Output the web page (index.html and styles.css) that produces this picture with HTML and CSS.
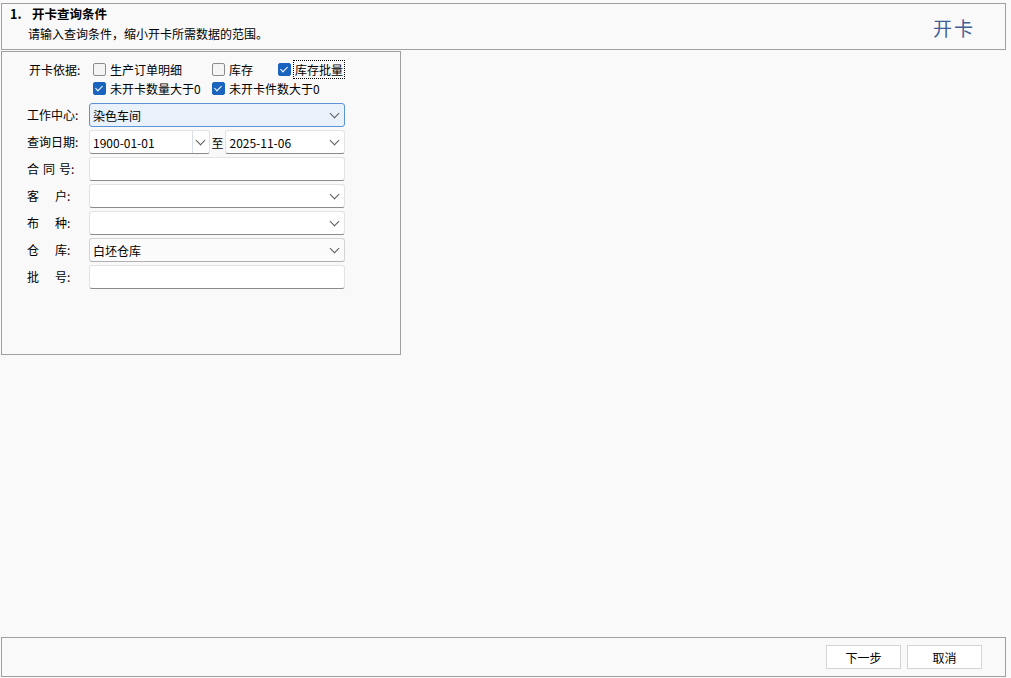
FILE: index.html
```html
<!DOCTYPE html>
<html lang="zh-CN">
<head>
  <meta charset="UTF-8">
  <title>开卡</title>
  <link rel="stylesheet" href="styles.css">
</head>
<body>
  <div class="page">
    <div class="header">
      <div class="header-text">
        <div class="title"><span class="num">1.</span>开卡查询条件</div>
        <div class="subtitle">请输入查询条件，缩小开卡所需数据的范围。</div>
      </div>
      <div class="brand">开卡</div>
    </div>

    <div class="panel">
      <div class="form">
        <div class="label label-top">开卡依据:</div>
        <div class="checks">
          <label class="check"><span class="box"></span>生产订单明细</label>
          <label class="check"><span class="box"></span>库存</label>
          <label class="check"><span class="box on"></span><span class="focus">库存批量</span></label>
          <label class="check"><span class="box on"></span>未开卡数量大于0</label>
          <label class="check"><span class="box on"></span>未开卡件数大于0</label>
        </div>

        <div class="label">工作中心:</div>
        <div class="field combo active"><span class="val">染色车间</span><span class="arrow"></span></div>

        <div class="label">查询日期:</div>
        <div class="dates">
          <div class="field date first"><span class="val">1900-01-01</span><span class="drop"><span class="arrow"></span></span></div>
          <span class="to">至</span>
          <div class="field date"><span class="val">2025-11-06</span><span class="arrow"></span></div>
        </div>

        <div class="label">合 同 号:</div>
        <div class="field"></div>

        <div class="label">客    户:</div>
        <div class="field combo"><span class="val"></span><span class="arrow"></span></div>

        <div class="label">布    种:</div>
        <div class="field combo"><span class="val"></span><span class="arrow"></span></div>

        <div class="label">仓    库:</div>
        <div class="field combo grey"><span class="val">白坯仓库</span><span class="arrow"></span></div>

        <div class="label">批    号:</div>
        <div class="field"></div>
      </div>
    </div>

    <div class="spacer"></div>

    <div class="footer">
      <button class="btn">下一步</button>
      <button class="btn">取消</button>
    </div>
  </div>
</body>
</html>
```

FILE: styles.css
```css
body {
  margin: 0;
  background-color: #f9f9f9;
  font-family: "Noto Sans CJK SC", "Liberation Sans", sans-serif;
  font-size: 12px;
  color: #000;
}

.page {
  height: 678px;
  display: flex;
  flex-direction: column;
  padding: 3px 5px 1px 1px;
  box-sizing: border-box;
}

.header {
  height: 47px;
  box-sizing: border-box;
  border: 1px solid #a0a0a0;
  display: flex;
  justify-content: space-between;
  align-items: center;
}

.header-text {
  padding-left: 8px;
  align-self: flex-start;
  padding-top: 2px;
}

.title {
  font-weight: bold;
  font-size: 12.5px;
  line-height: 16px;
}

.title .num {
  display: inline-block;
  width: 22px;
}

.subtitle {
  margin-top: 4px;
  padding-left: 18px;
  line-height: 16px;
}

.brand {
  font-size: 19px;
  color: #3f5f96;
  letter-spacing: 2px;
  margin-right: 30px;
  margin-top: 2px;
}

.panel {
  margin-top: 1px;
  width: 400px;
  height: 304px;
  box-sizing: border-box;
  border: 1px solid #a0a0a0;
  padding: 8px 0 0 25px;
}

.form {
  display: grid;
  grid-template-columns: 62px 256px;
  row-gap: 3px;
  align-items: center;
}

.label {
  white-space: pre;
  word-spacing: 1.3px;
  line-height: 24px;
}

.label-top {
  align-self: start;
  line-height: 19px;
  padding-left: 2px;
}

.checks {
  display: grid;
  grid-template-columns: 119px 66px auto;
  padding-left: 4px;
  margin-bottom: 2px;
}

.check {
  display: flex;
  align-items: center;
  height: 19px;
  white-space: nowrap;
}

.box {
  flex-shrink: 0;
  width: 11px;
  height: 11px;
  border: 1px solid #8c8c8c;
  border-radius: 2px;
  background: #f4f4f4;
  margin-right: 4px;
  position: relative;
}

.box.on {
  background: #1a63be;
  border-color: #1a63be;
}

.box.on::after {
  content: "";
  position: absolute;
  left: 3px;
  top: 1px;
  width: 3px;
  height: 6px;
  border: solid #fff;
  border-width: 0 1px 1px 0;
  transform: rotate(45deg);
}

.focus {
  outline: 1px dotted #000;
  outline-offset: 0;
  padding: 0 1px;
  margin-left: -1px;
}

.field {
  height: 24px;
  box-sizing: border-box;
  background: #fff;
  border: 1px solid #e3e3e3;
  border-bottom-color: #8a8a8a;
  border-radius: 3px;
  display: flex;
  align-items: center;
}

.field .val {
  flex: 1;
  padding-left: 3px;
}

.combo.active {
  background: #e9f1fa;
  border: 1px solid #5c93d6;
}

.combo.grey {
  background: #fbfbfb;
  border-color: #d4d4d4;
  border-bottom-color: #b0b0b0;
}

.arrow {
  width: 9px;
  height: 9px;
  margin-right: 5px;
  position: relative;
}

.arrow::before {
  content: "";
  position: absolute;
  left: 1px;
  top: -1px;
  width: 6px;
  height: 6px;
  border: solid #5a5a5a;
  border-width: 0 1px 1px 0;
  transform: rotate(45deg);
}

.dates {
  display: flex;
  align-items: center;
}

.date {
  width: 120px;
}

.date.first {
  width: 121px;
}

.drop {
  width: 16px;
  height: 22px;
  border-left: 1px solid #d8e0ea;
  display: flex;
  align-items: center;
  justify-content: center;
}

.drop .arrow {
  margin-right: 0;
}

.to {
  width: 16px;
  text-align: center;
}

.spacer {
  flex: 1;
}

.footer {
  height: 40px;
  box-sizing: border-box;
  border: 1px solid #a0a0a0;
  display: flex;
  align-items: center;
  justify-content: flex-end;
  gap: 6px;
  padding-right: 23px;
}

.btn {
  width: 75px;
  height: 24px;
  background: #fff;
  border: 1px solid #d4d4d4;
  font-family: "Noto Sans CJK SC", sans-serif;
  font-size: 12px;
  color: #000;
  padding: 0;
}
```
